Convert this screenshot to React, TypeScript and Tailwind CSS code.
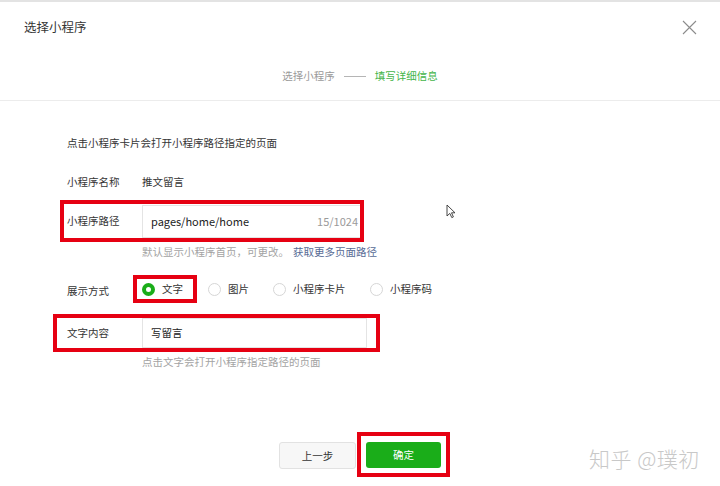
import { ReactNode } from "react";

function Radio({ checked, label }: { checked?: boolean; label: string }) {
  return (
    <div className="flex items-center gap-[7px]">
      {checked ? (
        <span className="w-[13px] h-[13px] rounded-full border-[4px] border-[#1aad19] bg-white" />
      ) : (
        <span className="w-[13px] h-[13px] rounded-full border border-[#d6d6d6] bg-white" />
      )}
      <span className="text-[10.5px] text-[#353535]">{label}</span>
    </div>
  );
}

function Mark({ className, children }: { className: string; children: ReactNode }) {
  return <div className={`border-[4px] border-[#e60012] ${className}`}>{children}</div>;
}

export default function App() {
  return (
    <div className="w-[720px] h-[486px] bg-white relative overflow-hidden border-t-2 border-[#e3e3e3] font-['Noto_Sans_CJK_SC','Liberation_Sans',sans-serif]">
      <div className="h-[99px] border-b border-[#ececec]">
        <div className="h-[50px] pl-[24px] pr-[24px] flex items-center justify-between">
          <h2 className="text-[12.5px] text-[#353535]">选择小程序</h2>
          <svg width="15" height="15" viewBox="0 0 15 15" className="mr-[-1px]">
            <path d="M1 1 L14 14 M14 1 L1 14" stroke="#8c8c8c" strokeWidth="1.1" fill="none" />
          </svg>
        </div>
        <div className="mt-[14px] h-[20px] flex items-center justify-center gap-[9px] text-[10.5px]">
          <span className="text-[#9a9a9a]">选择小程序</span>
          <span className="w-[22px] h-px bg-[#b5b5b5]" />
          <span className="text-[#44b549]">填写详细信息</span>
        </div>
      </div>

      <div className="flex flex-col text-[10.5px] text-[#353535]">
        <div className="mt-[33px] h-[18px] ml-[67px] flex items-center">
          点击小程序卡片会打开小程序路径指定的页面
        </div>
        <div className="mt-[21px] h-[18px] ml-[67px] flex items-center">
          <span className="w-[75px]">小程序名称</span>
          <span>推文留言</span>
        </div>

        <Mark className="mt-[9px] ml-[60px] w-[304px] h-[42px] flex items-center pl-[3px] overflow-hidden">
          <span className="w-[75px] shrink-0">小程序路径</span>
          <div className="h-[33px] w-[230px] shrink-0 border border-[#e4e4e4] flex items-center justify-between pl-[8px] pr-[13px]">
            <span className="text-[11px] text-[#222]">pages/home/home</span>
            <span className="text-[11px] text-[#9a9a9a]">15/1024</span>
          </div>
        </Mark>
        <div className="mt-[1px] h-[18px] ml-[142px] flex items-center text-[#a3a3a3]">
          默认显示小程序首页，可更改。
          <span className="ml-[4px] text-[#576b95]">获取更多页面路径</span>
        </div>

        <div className="mt-[14px] h-[28px] ml-[67px] flex items-center">
          <span className="w-[66px] mt-[3px]">展示方式</span>
          <Mark className="h-[28px] w-[64px] flex items-center pl-[5px]">
            <Radio checked label="文字" />
          </Mark>
          <div className="ml-[11px] w-[65px]">
            <Radio label="图片" />
          </div>
          <div className="w-[97px]">
            <Radio label="小程序卡片" />
          </div>
          <div>
            <Radio label="小程序码" />
          </div>
        </div>

        <Mark className="mt-[11px] ml-[53px] w-[327px] h-[38px] flex items-center pl-[10px]">
          <span className="w-[75px] shrink-0">文字内容</span>
          <div className="h-[30px] w-[225px] border border-[#e4e4e4] flex items-center pl-[8px]">
            <span className="text-[10.5px] text-[#222]">写留言</span>
          </div>
        </Mark>
        <div className="mt-[1px] h-[18px] ml-[142px] flex items-center text-[#a3a3a3]">
          点击文字会打开小程序指定路径的页面
        </div>

        <div className="mt-[61px] ml-[279px] flex items-start">
          <button className="mt-[10px] h-[27px] w-[77px] rounded-[3px] border border-[#e2e2e2] bg-[#f7f7f7] text-[10.5px] text-[#353535]">
            上一步
          </button>
          <Mark className="ml-[1px] w-[93px] h-[45px] pl-[5px] pt-[6px]">
            <button className="h-[26px] w-[75px] rounded-[3px] bg-[#1aad19] text-[10.5px] text-white">
              确定
            </button>
          </Mark>
        </div>
      </div>

      <svg className="absolute left-[446px] top-[202px]" width="10" height="15" viewBox="0 0 10 15">
        <path d="M1 1 L1 12 L3.8 9.4 L5.8 13.6 L7.4 12.9 L5.5 8.8 L9 8.8 Z" fill="#fff" stroke="#333" strokeWidth="0.9" strokeLinejoin="round" />
      </svg>

      <div className="absolute left-[589px] top-[441px] text-[21px] font-light text-[#c8c8c8] tracking-[0.5px]">
        知乎 @璞初
      </div>
    </div>
  );
}
